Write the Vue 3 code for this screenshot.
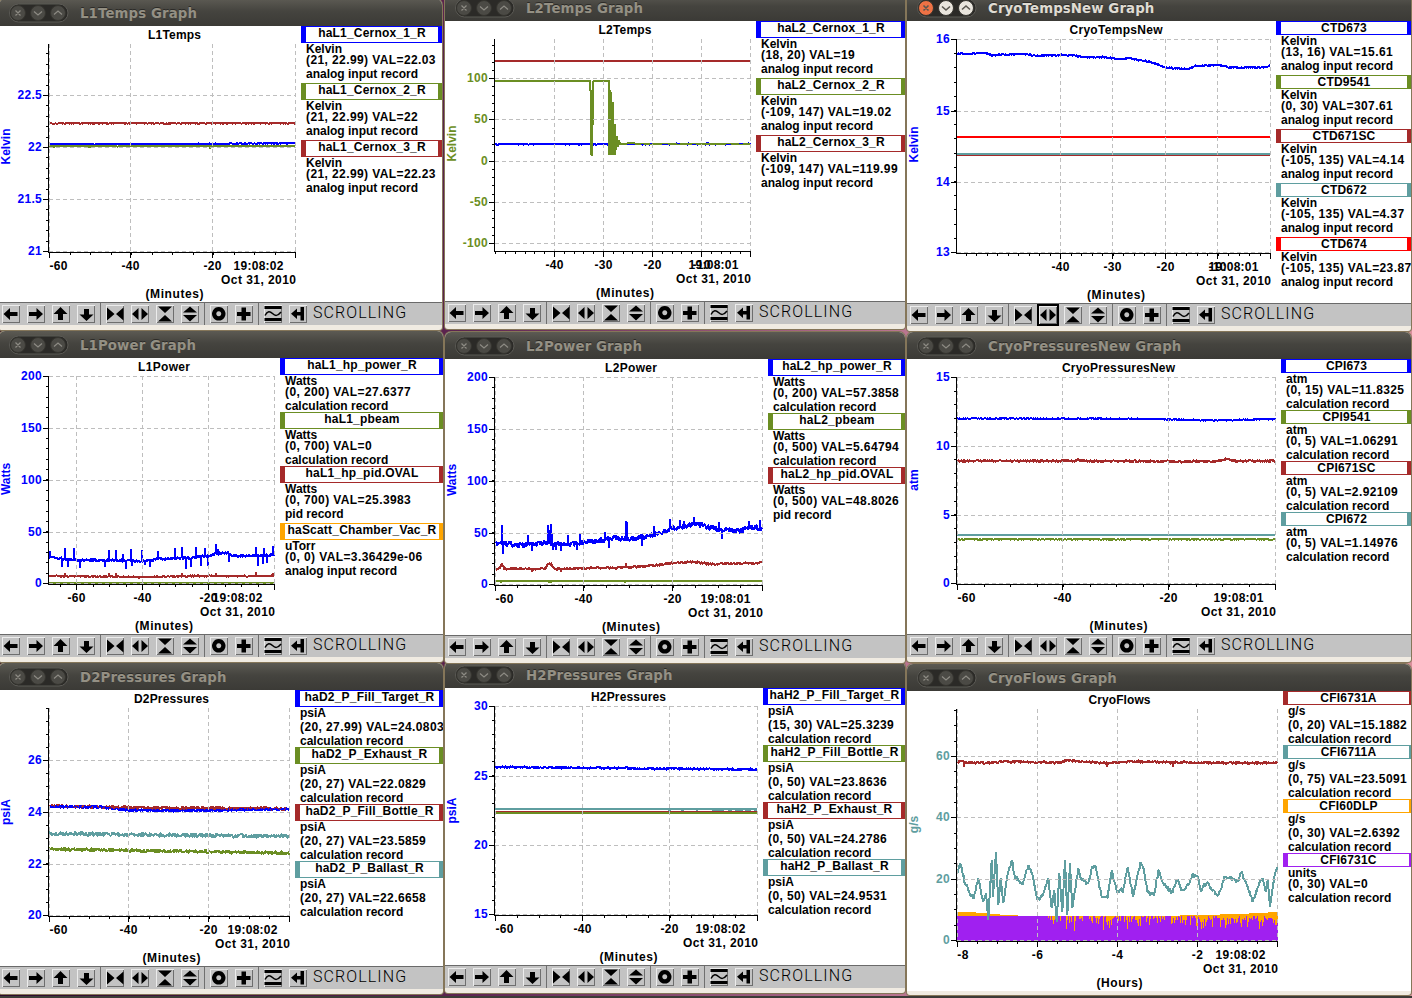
<template>
  <div class="desktop">
    <div class="panel-edge"></div>
    <section
      v-for="win in windows"
      :key="win.name"
      class="window"
      :class="{ active: win.active }"
      :style="{ left: win.x + 'px', top: win.top - 27 + 'px', width: win.w + 'px', height: win.end - win.top + 27 + 'px', zIndex: win.z || 1 }"
    >
      <header class="titlebar">
        <svg class="controls" width="60" height="20" viewBox="0 0 60 20">
          <rect class="pill" x="0.5" y="1" width="58.5" height="18" rx="9" />
          <circle class="knob close" cx="9" cy="10" r="7.5" />
          <circle class="knob" cx="29" cy="10" r="7.5" />
          <circle class="knob" cx="49" cy="10" r="7.5" />
          <path class="glyph" d="M6.5 7.5l5 5m0-5l-5 5M25 8.5l4 3.5 4-3.5M45 11.5l4-3.5 4 3.5" />
        </svg>
        <span class="caption">{{ win.name }} Graph</span>
      </header>

      <div class="content" :style="{ height: win.bar - win.top + 'px' }">
        <svg
          class="plot"
          :width="win.legendX - win.x"
          :height="win.bar - win.top"
          :viewBox="`${win.x} ${win.top} ${win.legendX - win.x} ${win.bar - win.top}`"
        >
          <text class="label middle" :x="plotCenter(win)" :y="win.titleY" :textLength="win.titleW" lengthAdjust="spacing">{{ win.name }}</text>

          <template v-for="(s, i) in win.series" :key="i">
            <path v-if="s.fill" class="bars" :d="s.d" :fill="s.color" />
            <path v-else class="trace" :d="s.d" :stroke="s.color" :stroke-width="s.width || 2" />
          </template>

          <path class="grid" :d="gridPath(win)" />
          <path class="axis" :d="axisPath(win)" />

          <text
            v-for="([y, text]) in win.gy"
            :key="'y' + text"
            class="label num end"
            :x="win.axisX - 6.5"
            :y="y + 3.5"
            :fill="win.color"
          >{{ text }}</text>
          <text
            v-for="([x, text]) in xLabels(win)"
            :key="'x' + text"
            class="label num middle"
            :x="x === win.axisX + 1 ? x + (text.length > 2 ? 9 : 5.5) : x"
            :y="win.axisY + 17"
          >{{ text }}</text>
          <text class="label middle" :x="rightEdge(win) - 37" :y="win.axisY + 17" textLength="50">{{ win.time }}</text>
          <text class="label" :x="rightEdge(win) - 74.5" :y="win.axisY + 31" textLength="75">Oct 31, 2010</text>
          <text
            class="label middle"
            :x="plotCenter(win)"
            :y="win.axisY + 45"
            :textLength="win.xUnit === 'Hours' ? 46 : 58"
          >({{ win.xUnit }})</text>
          <text
            class="label middle"
            :fill="win.color"
            :transform="`translate(${win.x + 11} ${win.unitY}) rotate(-90)`"
          >{{ win.unit }}</text>
        </svg>

        <div class="legend">
          <div v-for="[color, name, unit, value, record] in win.legend" :key="name" class="entry">
            <div class="pv" :class="{ deep: hasDescender(name), cut: !win.xUnit.startsWith('M') }" :style="{ borderColor: color }">
              <span class="pv-name">{{ name }}</span>
            </div>
            <div class="line" :class="{ deep: hasDescender(unit) }">{{ unit }}</div>
            <div class="line deep value">{{ value }}</div>
            <div class="line" :class="{ deep: hasDescender(record) }">{{ record }}</div>
          </div>
        </div>
      </div>

      <div v-if="!win.noToolbar" class="toolbar">
        <div v-for="(group, g) in toolGroups" :key="g" class="tool-group">
          <button v-for="tool in group" :key="tool" class="tool" :class="{ focused: win.active && tool === 'hexpand' }">
            <svg width="18" height="18" viewBox="0 0 18 18">
              <path v-if="tool === 'ring'" :d="icons.ring" class="ring" />
              <template v-else-if="tool === 'wave'">
                <path d="M0.5 1h17v3h-17zM0.5 13h17v3h-17z" />
                <path d="M1 10.500C3.500 5.500 6 6 8.500 8.500S13.500 11.500 17 7" class="wave" />
              </template>
              <path v-else :d="icons[tool]" />
            </svg>
          </button>
        </div>
        <span class="mode">SCROLLING</span>
      </div>
      <div class="frame-bottom"></div>
    </section>
  </div>
</template>

<script setup>
const BLUE = '#0000ff'
const OLIVE = '#6b8e23'
const BROWN = '#a52a2a'
const CADET = '#5f9ea0'
const ORANGE = '#ffa500'
const PURPLE = '#a020f0'
const RED = '#ff0000'

const ANALOG = 'analog input record'
const CALC = 'calculation record'

const toolGroups = [
  ['left', 'right', 'up', 'down'],
  ['hshrink', 'hexpand', 'vshrink', 'vexpand'],
  ['ring', 'plus'],
  ['wave', 'latest']
]

const icons = {
  left: 'M1.5 9L8 3v4h7.5v4H8v4z',
  right: 'M16 9L9.5 3v4H2v4h7.5v4z',
  up: 'M8.5 2L15.5 9H11v6H6V9H1.5z',
  down: 'M9.5 16L2.5 9.5H7V4h5v5.5h4.5z',
  hshrink: 'M1 2.5v13l7.5-6.5zM17.5 2.5v13L10 9z',
  hexpand: 'M1 9l6.5-6v12zM17 9l-6.5-6v12z',
  vshrink: 'M2 1.5h14L9 8zM2 16.5h14L9 10z',
  vexpand: 'M9 1.5l7 6H2zM9 16.5l7-6.5H2z',
  ring: 'M8.75 4.2a4.6 4.6 0 1 0 0.01 0z',
  plus: 'M6.5 2.5h4.500v4.500h4.500v4h-4.500v4.500h-4.500v-4.500H2V7h4.500z',
  latest: 'M2 8.800L8 3.500v3.500h3.500V2h3.500v13.500h-3.500v-5H8v3.500z'
}

// small deterministic generator so the traces look the same on every load
const random = (seed) => {
  let s = seed
  return () => {
    s = (s * 1664525 + 1013904223) % 4294967296
    return s / 4294967296
  }
}

const interpolate = (pts, x) => {
  for (let i = 1; i < pts.length; i++) {
    if (x <= pts[i][0]) {
      const [x0, y0] = pts[i - 1]
      const [x1, y1] = pts[i]
      return y0 + ((y1 - y0) * (x - x0)) / (x1 - x0)
    }
  }
  return pts[pts.length - 1][1]
}

// two readings per pixel column, like a strip chart
const noisy = (color, pts, amp, spikes = [], seed = 7) => {
  const rnd = random(seed * 977)
  const peaks = new Map(spikes)
  const out = []
  for (let x = pts[0][0]; x <= pts[pts.length - 1][0]; x++) {
    const base = interpolate(pts, x)
    const a = base + (rnd() - 0.5) * 2 * amp
    const b = base + (rnd() - 0.5) * 2 * amp
    out.push(`${x} ${a.toFixed(1)}`, `${x} ${b.toFixed(1)}`)
    if (peaks.has(x)) {
      out.push(`${x} ${peaks.get(x)}`, `${x} ${base.toFixed(1)}`)
    }
  }
  return { color, d: 'M' + out.join('L') }
}

const flat = (color, x0, x1, y, width = 2) => ({ color, width, d: `M${x0} ${y}H${x1}` })
const poly = (color, pts) => ({ color, d: 'M' + pts.map(p => p.join(' ')).join('L') })

// valve on/off readings, so dense that every pixel column is a bar
const valveBars = () => {
  const rnd = random(4211)
  let d = ''
  for (let x = 957; x < 1278; x++) {
    let top = 916
    const late = x > 1200
    if (x > 1046 && rnd() < (late ? 0.85 : 0.6)) {
      top = 917 + Math.floor(rnd() * rnd() * (late ? 13 : 16)) + (late ? 1 : 0)
    }
    d += `M${x} ${top}h1V941h-1z`
  }
  return d
}

const flowPts = [
  [957.3, 873.3], [960, 863.3], [965, 883.3], [968.3, 890], [973.3, 898.3], [978.3, 878.3], [983.3, 901.7],
  [986, 893.3], [988.3, 920], [991.7, 860], [993, 896.7], [996, 851.7], [998.3, 905], [1000.7, 878.3],
  [1003.3, 903.3], [1006.7, 880], [1011.7, 860], [1015, 876.7], [1022.3, 885], [1028.3, 865], [1031.7, 873.3],
  [1037.7, 900], [1043.3, 893.3], [1048.3, 878.3], [1051.7, 908.3], [1054.3, 890], [1056.7, 921.7],
  [1059.3, 873.3], [1062.3, 911.7], [1065, 860], [1067.3, 915], [1070, 863.3], [1072.3, 908.3], [1075, 890],
  [1078.3, 868.3], [1081.7, 880], [1088.3, 883.3], [1091.7, 868.3], [1095.7, 866], [1101.7, 896.7],
  [1107.7, 898.3], [1111.7, 870.7], [1116.7, 891.7], [1123.3, 890], [1127.7, 867.3], [1133, 896.7],
  [1140.3, 862.3], [1143, 866.7], [1147.7, 893.3], [1154.3, 893.3], [1158.3, 870.7], [1163.3, 883.3],
  [1171.7, 891.7], [1177.7, 880], [1182.3, 890], [1188.3, 885], [1192.3, 875], [1197.3, 876.7], [1200.7, 890],
  [1206.7, 882.7], [1218.3, 896], [1225, 876.7], [1238.3, 881.7], [1241.7, 871.7], [1246.7, 885],
  [1252.7, 901.7], [1257.7, 886.7], [1262.7, 878.3], [1265.7, 891.7], [1267.7, 880], [1270, 906.7],
  [1272.3, 890], [1275, 873.3], [1277.5, 867.3]
]

// follow the slow curve but keep the sensor jitter of about a pixel
const flowTrace = () => {
  const rnd = random(31)
  const out = []
  flowPts.forEach(([x, y], i) => {
    out.push([x, y])
    const next = flowPts[i + 1]
    if (next && next[0] - x > 3) {
      const n = Math.floor((next[0] - x) / 0.7)
      for (let k = 1; k < n; k++) {
        const t = k / n
        out.push([(x + (next[0] - x) * t).toFixed(1), (y + (next[1] - y) * t + (rnd() - 0.5) * 5).toFixed(1)])
      }
    }
  })
  return poly(CADET, out)
}

const windows = [
  {
    name: 'L1Temps', x: -1, w: 443, top: 26, bar: 302, end: 330, legendX: 301, titleY: 39, titleW: 53,
    axisX: 48.5, axisY: 252.5, plotTop: 44, unit: 'Kelvin', unitY: 146.5, color: BLUE, xUnit: 'Minutes', time: '19:08:02',
    gx: [[49.5, '-60'], [130.5, '-40'], [212.5, '-20'], [295.5, '']],
    gy: [[95.5, '22.5'], [147.5, '22'], [199.5, '21.5'], [251.5, '21']],
    mx: 4, my: 5,
    series: [
      noisy(BLUE, [[49, 144.2], [200, 144], [295, 143.2]], 0.6, [], 1),
      noisy(OLIVE, [[49, 146.2], [295, 146]], 0.4, [[54, 148], [90, 148], [210, 149], [282, 148]], 2),
      noisy(BROWN, [[49, 123.3], [295, 123.2]], 0.8, [], 3)
    ],
    legend: [
      [BLUE, 'haL1_Cernox_1_R', 'Kelvin', '(21, 22.99) VAL=22.03', ANALOG],
      [OLIVE, 'haL1_Cernox_2_R', 'Kelvin', '(21, 22.99) VAL=22', ANALOG],
      [BROWN, 'haL1_Cernox_3_R', 'Kelvin', '(21, 22.99) VAL=22.23', ANALOG]
    ]
  },
  {
    name: 'L2Temps', x: 445, w: 460, top: 21, bar: 301, end: 329, legendX: 756, titleY: 34, titleW: 53,
    axisX: 494.5, axisY: 251.5, plotTop: 39, unit: 'Kelvin', unitY: 143.5, color: OLIVE, xUnit: 'Minutes', time: '19:08:01',
    gx: [[554.5, '-40'], [603.5, '-30'], [652.5, '-20'], [701.5, '-10'], [750.5, '']],
    gy: [[78.5, '100'], [119.5, '50'], [161.5, '0'], [202.5, '-50'], [243.5, '-100']],
    mx: 5, my: 5,
    series: [
      noisy(BLUE, [[495, 144.2], [750, 144]], 0.7, [], 4),
      poly(OLIVE, [
        [495, 81], [590, 81], [590, 91], [591, 91], [591, 155], [592, 155], [592, 92], [593, 125], [593, 81],
        [609, 81], [609, 155], [610, 90], [611, 155], [611, 92], [612, 155], [613, 102], [613, 155], [614, 124],
        [615, 155], [615, 124], [616, 150], [617, 136], [618, 147], [619, 140], [620, 144], [634, 143], [636, 144], [750, 144]
      ]),
      { color: BLUE, width: 1, d: 'M641 144.500h3m6-1h2m10 1h6m9-1h3m12 1h4m10-2h2m18 2h5m8-1h4' },
      flat(BROWN, 495, 750, 61)
    ],
    legend: [
      [BLUE, 'haL2_Cernox_1_R', 'Kelvin', '(18, 20) VAL=19', ANALOG],
      [OLIVE, 'haL2_Cernox_2_R', 'Kelvin', '(-109, 147) VAL=19.02', ANALOG],
      [BROWN, 'haL2_Cernox_3_R', 'Kelvin', '(-109, 147) VAL=119.99', ANALOG]
    ]
  },
  {
    name: 'CryoTempsNew', x: 907, w: 504, top: 21, bar: 303, end: 331, legendX: 1276, titleY: 34, titleW: 93, active: true,
    axisX: 956.5, axisY: 253.5, plotTop: 39, unit: 'Kelvin', unitY: 144.5, color: BLUE, xUnit: 'Minutes', time: '19:08:01',
    gx: [[1060.5, '-40'], [1112.5, '-30'], [1165.5, '-20'], [1217.5, '-10'], [1270.5, '']],
    gy: [[39.5, '16'], [111.5, '15'], [182.5, '14'], [252.5, '13']],
    mx: 5, my: 5,
    series: [
      noisy(BLUE, [
        [957, 54], [983, 53], [992, 55], [1022, 54], [1038, 55.5], [1072, 55], [1085, 57.5], [1102, 57], [1122, 59.5],
        [1128, 58], [1152, 62.5], [1165, 67.5], [1188, 69], [1195, 66], [1217, 65], [1232, 67.5], [1265, 67.5], [1270, 65.5]
      ], 0.9, [], 5),
      flat(BROWN, 957, 1270, 155.5, 1),
      flat(CADET, 957, 1270, 154),
      flat(RED, 957, 1270, 137)
    ],
    legend: [
      [BLUE, 'CTD673', 'Kelvin', '(13, 16) VAL=15.61', ANALOG],
      [OLIVE, 'CTD9541', 'Kelvin', '(0, 30) VAL=307.61', ANALOG],
      [BROWN, 'CTD671SC', 'Kelvin', '(-105, 135) VAL=4.14', ANALOG],
      [CADET, 'CTD672', 'Kelvin', '(-105, 135) VAL=4.37', ANALOG],
      [RED, 'CTD674', 'Kelvin', '(-105, 135) VAL=23.87', ANALOG]
    ]
  },
  {
    name: 'L1Power', x: -1, w: 444, top: 358, bar: 634, end: 662, legendX: 280, titleY: 371, titleW: 52,
    axisX: 48.5, axisY: 584.5, plotTop: 376, unit: 'Watts', unitY: 479, color: BLUE, xUnit: 'Minutes', time: '19:08:02',
    gx: [[76.5, '-60'], [142.5, '-40'], [208.5, '-20'], [274.5, '']],
    gy: [[376.5, '200'], [428.5, '150'], [480.5, '100'], [532.5, '50'], [583.5, '0']],
    mx: 4, my: 5,
    series: [
      noisy(BLUE, [[49, 557], [75, 560], [142, 561], [160, 559], [190, 558], [205, 556], [215, 554], [228, 553], [235, 556], [274, 555]], 1.6, [
        [50, 551], [62, 567], [65, 548], [68, 567], [74, 548], [80, 568], [105, 567], [109, 550], [116, 550], [123, 554],
        [126, 569], [131, 549], [132, 566], [142, 550], [145, 565], [150, 567], [158, 551], [175, 548], [182, 547],
        [186, 569], [191, 567], [196, 547], [201, 566], [205, 548], [208, 566], [216, 544], [218, 549], [229, 562],
        [256, 547], [258, 566], [263, 564], [264, 548], [267, 563], [273, 546]
      ], 6),
      noisy(BROWN, [[49, 576], [142, 577], [200, 576], [274, 576]], 0.9, [[65, 573], [109, 573], [116, 573], [182, 573], [216, 573], [256, 572], [273, 573]], 7),
      flat(OLIVE, 49, 274, 583)
    ],
    legend: [
      [BLUE, 'haL1_hp_power_R', 'Watts', '(0, 200) VAL=27.6377', CALC],
      [OLIVE, 'haL1_pbeam', 'Watts', '(0, 700) VAL=0', CALC],
      [BROWN, 'haL1_hp_pid.OVAL', 'Watts', '(0, 700) VAL=25.3983', 'pid record'],
      [ORANGE, 'haScatt_Chamber_Vac_R', 'uTorr', '(0, 0) VAL=3.36429e-06', ANALOG]
    ]
  },
  {
    name: 'L2Power', x: 445, w: 460, top: 359, bar: 635, end: 663, legendX: 768, titleY: 372, titleW: 52, z: 3,
    axisX: 494.5, axisY: 585.5, plotTop: 377, unit: 'Watts', unitY: 480, color: BLUE, xUnit: 'Minutes', time: '19:08:01',
    gx: [[495.5, '-60'], [583.5, '-40'], [672.5, '-20'], [762.5, '']],
    gy: [[377.5, '200'], [429.5, '150'], [481.5, '100'], [533.5, '50'], [584.5, '0']],
    mx: 4, my: 5,
    series: [
      noisy(BLUE, [
        [496, 543], [520, 545], [545, 543], [570, 544], [590, 542], [612, 538], [630, 539], [650, 536], [660, 533],
        [672, 528], [690, 525], [703, 525], [715, 529], [740, 531], [750, 527], [762, 529]
      ], 2.8, [
        [502, 525], [503, 554], [523, 548], [528, 535], [532, 551], [548, 525], [549, 534], [550, 530], [551, 524],
        [552, 533], [553, 550], [556, 550], [561, 551], [568, 535], [577, 550], [580, 534], [605, 532], [609, 548],
        [626, 521], [627, 522], [642, 546], [654, 526], [670, 519], [680, 520], [684, 521], [694, 517], [719, 522],
        [722, 539], [749, 521], [760, 520]
      ], 8),
      noisy(BROWN, [
        [496, 569], [499, 569], [502, 564], [505, 569], [545, 569], [548, 564], [551, 564], [555, 569], [600, 568],
        [640, 567], [672, 563], [694, 562], [710, 564], [762, 563]
      ], 1.3, [[532, 572], [561, 572], [626, 563]], 9),
      noisy(OLIVE, [[496, 581], [762, 581]], 0, [[501, 583], [549, 583], [551, 583], [625, 583]], 10)
    ],
    legend: [
      [BLUE, 'haL2_hp_power_R', 'Watts', '(0, 200) VAL=57.3858', CALC],
      [OLIVE, 'haL2_pbeam', 'Watts', '(0, 500) VAL=5.64794', CALC],
      [BROWN, 'haL2_hp_pid.OVAL', 'Watts', '(0, 500) VAL=48.8026', 'pid record']
    ]
  },
  {
    name: 'CryoPressuresNew', x: 907, w: 504, top: 359, bar: 634, end: 662, legendX: 1281, titleY: 372, titleW: 113,
    axisX: 956.5, axisY: 584.5, plotTop: 377, unit: 'atm', unitY: 480, color: BLUE, xUnit: 'Minutes', time: '19:08:01',
    gx: [[957.5, '-60'], [1062.5, '-40'], [1168.5, '-20'], [1275.5, '']],
    gy: [[377.5, '15'], [446.5, '10'], [515.5, '5'], [583.5, '0']],
    mx: 4, my: 5,
    series: [
      noisy(BLUE, [[957, 418.5], [1140, 418.8], [1217, 420.5], [1275, 419]], 0.7, [], 11),
      noisy(BROWN, [[957, 461], [1075, 461], [1078, 459.5], [1084, 461], [1215, 461.5], [1226, 459], [1235, 461], [1275, 461]], 1.3, [], 12),
      noisy(OLIVE, [[957, 539.3], [1275, 539.3]], 0.7, [], 13),
      flat(CADET, 957, 1275, 535)
    ],
    legend: [
      [BLUE, 'CPI673', 'atm', '(0, 15) VAL=11.8325', CALC],
      [OLIVE, 'CPI9541', 'atm', '(0, 5) VAL=1.06291', CALC],
      [BROWN, 'CPI671SC', 'atm', '(0, 5) VAL=2.92109', CALC],
      [CADET, 'CPI672', 'atm', '(0, 5) VAL=1.14976', CALC]
    ]
  },
  {
    name: 'D2Pressures', x: -1, w: 444, top: 690, bar: 966, end: 994, legendX: 295, titleY: 703, titleW: 75,
    axisX: 48.5, axisY: 916.5, plotTop: 708, unit: 'psiA', unitY: 812, color: BLUE, xUnit: 'Minutes', time: '19:08:02',
    gx: [[49.5, '-60'], [128.5, '-40'], [208.5, '-20'], [289.5, '']],
    gy: [[760.5, '26'], [812.5, '24'], [864.5, '22'], [915.5, '20']],
    mx: 4, my: 4,
    series: [
      noisy(BLUE, [[50, 806.5], [100, 807], [125, 810], [200, 810.5], [289, 809]], 1.3, [], 14),
      noisy(BROWN, [[50, 806], [130, 807.5], [289, 808.5]], 1.7, [], 15),
      { ...noisy(BLUE, [[50, 806.5], [100, 807], [125, 810], [200, 810.5], [289, 809]], 1.6, [], 24), width: 1 },
      noisy(CADET, [[49, 833.5], [289, 836.5]], 2.1, [], 16),
      noisy(OLIVE, [[49, 849], [289, 853]], 1.8, [], 17)
    ],
    legend: [
      [BLUE, 'haD2_P_Fill_Target_R', 'psiA', '(20, 27.99) VAL=24.0803', CALC],
      [OLIVE, 'haD2_P_Exhaust_R', 'psiA', '(20, 27) VAL=22.0829', CALC],
      [BROWN, 'haD2_P_Fill_Bottle_R', 'psiA', '(20, 27) VAL=23.5859', CALC],
      [CADET, 'haD2_P_Ballast_R', 'psiA', '(20, 27) VAL=22.6658', CALC]
    ]
  },
  {
    name: 'H2Pressures', x: 445, w: 460, top: 688, bar: 965, end: 993, legendX: 763, titleY: 701, titleW: 75,
    axisX: 494.5, axisY: 915.5, plotTop: 706, unit: 'psiA', unitY: 810.5, color: BLUE, xUnit: 'Minutes', time: '19:08:02',
    gx: [[495.5, '-60'], [582.5, '-40'], [669.5, '-20'], [757.5, '']],
    gy: [[706.5, '30'], [776.5, '25'], [845.5, '20'], [914.5, '15']],
    mx: 4, my: 5,
    series: [
      noisy(BLUE, [[495, 767], [757, 769.5]], 1.2, [], 18),
      flat(CADET, 495, 757, 809),
      flat(BROWN, 495, 757, 811.5, 1),
      flat(OLIVE, 495, 757, 813),
      { color: CADET, width: 1, d: 'M668 810.500h3m10 0h3m12 0h2m14 0h12m4 0h4m3 0h8m2 0h6m3 0h3' }
    ],
    legend: [
      [BLUE, 'haH2_P_Fill_Target_R', 'psiA', '(15, 30) VAL=25.3239', CALC],
      [OLIVE, 'haH2_P_Fill_Bottle_R', 'psiA', '(0, 50) VAL=23.8636', CALC],
      [BROWN, 'haH2_P_Exhaust_R', 'psiA', '(0, 50) VAL=24.2786', CALC],
      [CADET, 'haH2_P_Ballast_R', 'psiA', '(0, 50) VAL=24.9531', CALC]
    ]
  },
  {
    name: 'CryoFlows', x: 907, w: 504, top: 691, bar: 991, end: 995, legendX: 1283, titleY: 704, titleW: 62, noToolbar: true,
    axisX: 956.5, axisY: 941.5, plotTop: 709, unit: 'g/s', unitY: 824.5, color: CADET, xUnit: 'Hours', time: '19:08:02',
    gx: [[957.5, '-8'], [1037.5, '-6'], [1117.5, '-4'], [1197.5, '-2'], [1277.5, '']],
    gy: [[756.5, '60'], [817.5, '40'], [879.5, '20'], [940.5, '0']],
    mx: 4, my: 4,
    series: [
      noisy(BROWN, [
        [957, 762], [962, 760.5], [965, 762.5], [990, 763], [1005, 761.5], [1040, 762.5], [1060, 762.5], [1067, 760.5],
        [1090, 762], [1100, 763], [1135, 761.5], [1180, 762.5], [1277, 763]
      ], 1.3, [[964, 767], [1107, 767], [1173, 767]], 19),
      { color: ORANGE, fill: true, d: 'M957 912L970 912L1000 914.5L1018 915.500L1180 915.500L1240 914L1278 912V941H957z' },
      { color: PURPLE, fill: true, d: valveBars() },
      flowTrace()
    ],
    legend: [
      [BROWN, 'CFI6731A', 'g/s', '(0, 20) VAL=15.1882', CALC],
      [CADET, 'CFI6711A', 'g/s', '(0, 75) VAL=23.5091', CALC],
      [ORANGE, 'CFI60DLP', 'g/s', '(0, 30) VAL=2.6392', CALC],
      [PURPLE, 'CFI6731C', 'units', '(0, 30) VAL=0', CALC]
    ]
  }
]

const hasDescender = (text) => /[gjpqy_,(]/.test(text)
const rightEdge = (win) => win.gx[win.gx.length - 1][0]
const plotCenter = (win) => (win.axisX + rightEdge(win)) / 2 + 2.5
const xLabels = (win) => win.gx.filter(([, text]) => text)

const gridPath = (win) => {
  const right = rightEdge(win)
  const vertical = win.gx.map(([x]) => `M${x} ${win.plotTop}V${win.axisY}`)
  const horizontal = win.gy.map(([y]) => `M${win.axisX} ${y}H${right}`)
  return vertical.concat(horizontal).join('')
}

const axisPath = (win) => {
  const { axisX, axisY, plotTop, gx, gy } = win
  const right = rightEdge(win)
  let d = `M${axisX} ${plotTop}V${axisY}M${axisX} ${axisY}H${right + 0.5}`
  gx.forEach(([x]) => { d += `M${x} ${axisY}v5.5` })
  gy.forEach(([y]) => { d += `M${axisX} ${y}h-5.5` })

  const stepX = (right - gx[0][0]) / (gx.length - 1) / win.mx
  for (let x = right; x > axisX + 1; x -= stepX) d += `M${Math.floor(x) + 0.5} ${axisY}v2.5`

  const bottom = gy[gy.length - 1][0]
  const stepY = (bottom - gy[0][0]) / (gy.length - 1) / win.my
  for (let y = bottom; y >= plotTop; y -= stepY) d += `M${axisX} ${Math.floor(y) + 0.5}h-2.5`
  return d
}
</script>

<style>
html,
body {
  margin: 0;
  overflow: hidden;
}
</style>

<style scoped>
.desktop {
  position: relative;
  width: 1412px;
  height: 998px;
  overflow: hidden;
  background: linear-gradient(90deg, #2d0b29 0%, #5d2450 33%, #b97590 64%, #d9909c 100%);
  font-family: "Liberation Sans", Arial, sans-serif;
}

.panel-edge {
  position: absolute;
  left: 0;
  right: 0;
  bottom: 0;
  height: 2px;
  background: #3c3b37;
}

.window {
  position: absolute;
  display: flex;
  flex-direction: column;
  border-radius: 6px 6px 3px 3px;
  background: #f0ebe2;
  box-shadow: 0 0 0 1px #857659;
}

.titlebar {
  display: flex;
  align-items: center;
  flex: none;
  height: 27px;
  padding-left: 10px;
  box-sizing: border-box;
  border-radius: 6px 6px 0 0;
  background: linear-gradient(#5c5a53, #45443f 45%, #3b3a36);
}

.controls {
  flex: none;
}

.pill {
  fill: #2b2a27;
  stroke: #5b5a55;
}

.knob {
  fill: #4b4a45;
  stroke: #35342f;
}

.glyph {
  fill: none;
  stroke: #8d8b84;
  stroke-width: 1.2;
}

.active .knob {
  fill: #e9e5dd;
}

.active .knob.close {
  fill: #ee7245;
}

.active .glyph {
  stroke: #5a5750;
  stroke-width: 1.6;
}

.caption {
  margin-left: 11px;
  font: bold 13.33px/27px "DejaVu Sans", sans-serif;
  letter-spacing: 0.1px;
  color: #949084;
  text-shadow: 0 -1px 0 #2c2b28;
  white-space: nowrap;
  position: relative;
  top: 0.5px;
}

.active .caption {
  color: #dfdbd2;
}

.content {
  display: flex;
  flex: none;
  background: #ffffff;
  overflow: hidden;
}

.plot {
  flex: none;
  display: block;
}

.label {
  font-size: 12px;
  font-weight: bold;
}

.num {
  letter-spacing: 0.3px;
}

.middle {
  text-anchor: middle;
}

.end {
  text-anchor: end;
}

.grid {
  fill: none;
  stroke: #bebebe;
  stroke-dasharray: 4 3;
  shape-rendering: crispEdges;
}

.axis {
  fill: none;
  stroke: #000000;
  shape-rendering: crispEdges;
}

.trace {
  fill: none;
  stroke-linejoin: bevel;
  shape-rendering: crispEdges;
}

.bars {
  shape-rendering: crispEdges;
}

.legend {
  flex: 1;
  min-width: 0;
  overflow: hidden;
  font-size: 12px;
  font-weight: bold;
  line-height: 12px;
  color: #000000;
  white-space: nowrap;
}

.entry {
  margin-bottom: 1px;
}

.pv {
  display: flex;
  justify-content: center;
  height: 14px;
  box-sizing: border-box;
  border-style: solid;
  border-width: 1px 4px 1px 5px;
}

.pv.deep {
  height: 17px;
}

.pv.cut {
  border-right-width: 2px;
}

.pv-name {
  letter-spacing: 0.2px;
}

.line {
  height: 11px;
  padding-left: 5px;
}

.line.deep {
  height: 14px;
}

.value {
  letter-spacing: 0.4px;
}

.toolbar {
  display: flex;
  flex: none;
  height: 23px;
  padding-left: 3px;
  box-sizing: border-box;
  border-top: 1px solid #6a6a6a;
  background: #c3c3c3;
}

.tool-group {
  display: flex;
  gap: 7px;
  padding: 2px 5px 0 0;
  margin-right: 5px;
  border-right: 1px solid #6f6f6f;
}

.tool-group:last-of-type {
  margin-right: 0;
  border-right: none;
}

.tool {
  width: 18px;
  height: 18px;
  padding: 0;
  border: none;
  background: #c3c3c3;
  box-shadow: inset 1px 1px 0 #ececec, inset -1px -1px 0 #6e6e6e;
}

.tool.focused {
  outline: 2px solid #000000;
}

.tool svg {
  display: block;
}

.ring {
  fill: none;
  stroke: #000000;
  stroke-width: 4.2;
}

.wave {
  fill: none;
  stroke: #000000;
  stroke-width: 1.5;
}

.mode {
  margin-left: 1px;
  font-family: Roboto, "Liberation Sans", sans-serif;
  font-weight: 300;
  font-size: 16px;
  line-height: 20px;
  letter-spacing: 1.1px;
  color: #000000;
}

.frame-bottom {
  flex: 1;
}
</style>
